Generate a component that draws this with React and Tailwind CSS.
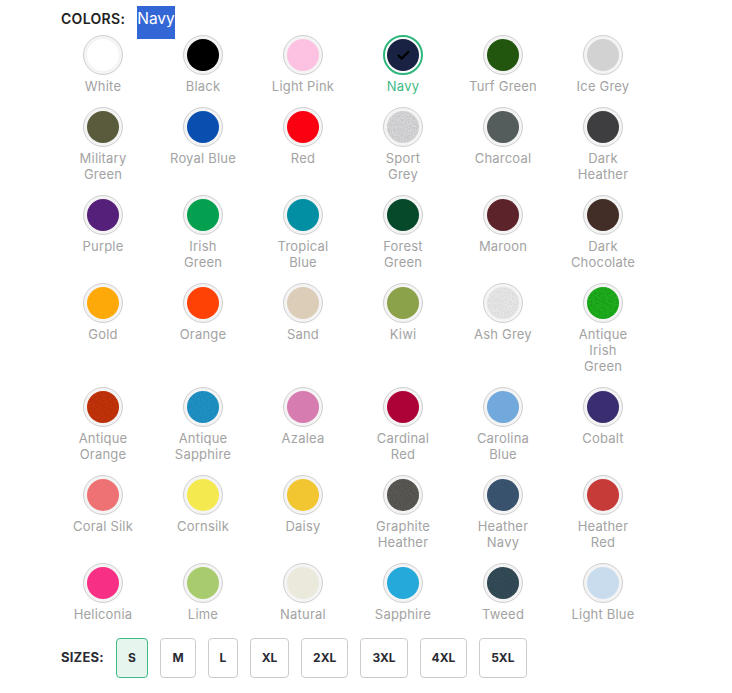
import { Check } from "lucide-react";

const font = "font-['Inter','Noto_Sans',sans-serif]";

// noise: [baseFrequency, opacity, blend colour] for the heathered fabrics
const COLORS = [
  { name: "White", hex: "#ffffff" },
  { name: "Black", hex: "#000000" },
  { name: "Light Pink", hex: "#fdc2e2" },
  { name: "Navy", hex: "#1a2244", selected: true },
  { name: "Turf Green", hex: "#22560f" },
  { name: "Ice Grey", hex: "#d2d2d2" },
  { name: "Military\nGreen", hex: "#595b3c" },
  { name: "Royal Blue", hex: "#0a4fb0" },
  { name: "Red", hex: "#fb0011" },
  { name: "Sport\nGrey", hex: "#c8c8ca", noise: [0.9, 0.45, "#ffffff"] },
  { name: "Charcoal", hex: "#555c5c" },
  { name: "Dark\nHeather", hex: "#3e3e40" },
  { name: "Purple", hex: "#54207a" },
  { name: "Irish\nGreen", hex: "#04a04f" },
  { name: "Tropical\nBlue", hex: "#028ea3" },
  { name: "Forest\nGreen", hex: "#05492a" },
  { name: "Maroon", hex: "#5c232b" },
  { name: "Dark\nChocolate", hex: "#422e27" },
  { name: "Gold", hex: "#fea90a" },
  { name: "Orange", hex: "#fe4105" },
  { name: "Sand", hex: "#dccdb8" },
  { name: "Kiwi", hex: "#8ba14a" },
  { name: "Ash Grey", hex: "#dcdcdc", noise: [0.9, 0.5, "#ffffff"] },
  { name: "Antique\nIrish\nGreen", hex: "#1fae1d", noise: [0.5, 0.35, "#0b6b0b"] },
  { name: "Antique\nOrange", hex: "#c2330a", noise: [0.5, 0.3, "#8a2206"] },
  { name: "Antique\nSapphire", hex: "#2091c4", noise: [0.6, 0.3, "#146c96"] },
  { name: "Azalea", hex: "#d77cb1" },
  { name: "Cardinal\nRed", hex: "#ad0237" },
  { name: "Carolina\nBlue", hex: "#71a9dc" },
  { name: "Cobalt", hex: "#3a2e70" },
  { name: "Coral Silk", hex: "#ee7274" },
  { name: "Cornsilk", hex: "#f4e94f" },
  { name: "Daisy", hex: "#f2c630" },
  { name: "Graphite\nHeather", hex: "#5c5a55", noise: [0.9, 0.35, "#2e2e2c"] },
  { name: "Heather\nNavy", hex: "#3b5470", noise: [0.6, 0.2, "#25384f"] },
  { name: "Heather\nRed", hex: "#c63a38" },
  { name: "Heliconia", hex: "#f72f85" },
  { name: "Lime", hex: "#a8cb6d" },
  { name: "Natural", hex: "#ebe8dc" },
  { name: "Sapphire", hex: "#25a8da" },
  { name: "Tweed", hex: "#344c58", noise: [0.9, 0.3, "#1e2f38"] },
  { name: "Light Blue", hex: "#c9dcee" },
];

const SIZES = [
  { label: "S", w: "w-[32px]", active: true },
  { label: "M", w: "w-[36px]" },
  { label: "L", w: "w-[30px]" },
  { label: "XL", w: "w-[39px]" },
  { label: "2XL", w: "w-[47.4px]" },
  { label: "3XL", w: "w-[47.4px]" },
  { label: "4XL", w: "w-[47.4px]" },
  { label: "5XL", w: "w-[47.4px]" },
];

function Fabric({ id, noise }) {
  const [freq, opacity, tint] = noise;
  return (
    <svg width="32" height="32" className="absolute inset-0">
      <filter id={id}>
        <feTurbulence type="fractalNoise" baseFrequency={freq} numOctaves="2" seed="4" />
        <feColorMatrix values="0 0 0 0 0  0 0 0 0 0  0 0 0 0 0  2.4 0 0 0 -0.9" />
        <feComposite in="SourceGraphic" operator="in" />
      </filter>
      <rect width="32" height="32" fill={tint} opacity={opacity} filter={`url(#${id})`} />
    </svg>
  );
}

function Swatch({ color, index }) {
  const on = color.selected;
  return (
    <div className="flex flex-col items-center">
      <div
        className={`flex h-10 w-10 items-center justify-center rounded-full ${
          on ? "border-2 border-[#2eb67d] bg-white" : "border border-[#cfcfcf] bg-[#f4f4f4]"
        }`}
      >
        <div
          className="relative flex h-8 w-8 items-center justify-center overflow-hidden rounded-full"
          style={{ backgroundColor: color.hex }}
        >
          {color.noise && <Fabric id={`fabric-${index}`} noise={color.noise} />}
          {on && <Check size={15} strokeWidth={3.5} className="text-black" />}
        </div>
      </div>
      <span
        className={`mt-[3px] whitespace-pre-line text-center text-[13px] leading-4 tracking-[0.2px] ${
          on ? "text-[#3dbb85]" : "text-[#a3a3a3]"
        }`}
      >
        {color.name}
      </span>
    </div>
  );
}

export default function App() {
  return (
    <div className={`min-h-[693px] bg-white pt-[6px] ${font}`}>
      <div className="flex h-[29px] items-start pl-[61px]">
        <span className="w-[76px] text-sm font-semibold leading-[26px] tracking-[0.3px] text-[#222222]">COLORS:</span>
        <span className="relative h-[33px] w-[38px] bg-[#3367d6] text-center text-[15.5px] leading-[26px] text-white">Navy</span>
      </div>

      <div className="ml-[53px] grid w-[600px] grid-cols-[repeat(6,100px)] gap-y-[13px]">
        {COLORS.map((c, i) => (
          <Swatch key={c.name} color={c} index={i} />
        ))}
      </div>

      <div className="mt-[16px] flex items-center gap-3 pl-[61px]">
        <span className="w-[43px] whitespace-nowrap text-[13px] font-bold tracking-[0.2px] text-[#2b2b33]">SIZES:</span>
        {SIZES.map((s) => (
          <button
            key={s.label}
            className={`flex h-10 items-center justify-center rounded border text-xs font-bold text-[#2b2b33] ${s.w} ${
              s.active ? "border-[#3dbb85] bg-[#e6f5ee]" : "border-[#cccccc] bg-white"
            }`}
          >
            {s.label}
          </button>
        ))}
      </div>
    </div>
  );
}
